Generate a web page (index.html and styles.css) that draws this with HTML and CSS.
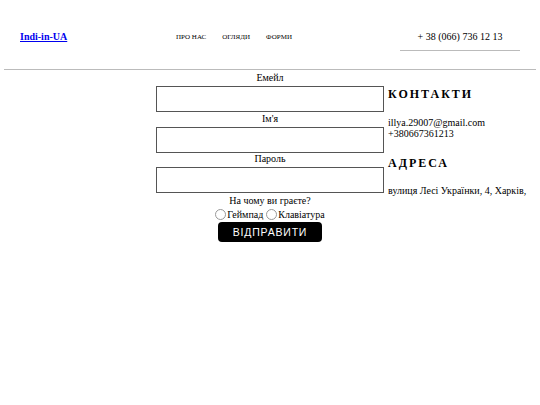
FILE: index.html
```html
<!DOCTYPE html>
<html lang="uk">
<head>
<meta charset="utf-8">
<title>Indi-in-UA</title>
<link rel="stylesheet" href="styles.css">
</head>
<body>
<div class="page">
  <header class="header">
    <a class="logo" href="#">Indi-in-UA</a>
    <nav class="nav">
      <a href="#">ПРО НАС</a>
      <a href="#">ОГЛЯДИ</a>
      <a href="#">ФОРМИ</a>
    </nav>
    <div class="phone">+ 38 (066) 736 12 13</div>
  </header>
  <hr class="divider">
  <main class="main">
    <div class="spacer"></div>
    <form class="form">
      <label class="lbl">Емейл</label>
      <input class="field" type="email">
      <label class="lbl">Ім'я</label>
      <input class="field" type="text">
      <label class="lbl">Пароль</label>
      <input class="field" type="password">
      <p class="question">На чому ви граєте?</p>
      <div class="radios">
        <label class="radio"><span class="dot"></span>Геймпад</label>
        <label class="radio"><span class="dot"></span>Клавіатура</label>
      </div>
      <button class="submit" type="button">ВІДПРАВИТИ</button>
    </form>
    <aside class="aside">
      <h2 class="heading">КОНТАКТИ</h2>
      <p class="info">illya.29007@gmail.com<br>+380667361213</p>
      <h2 class="heading">АДРЕСА</h2>
      <p class="info addr">вулиця Лесі Українки, 4, Харків,</p>
    </aside>
  </main>
</div>
</body>
</html>
```

FILE: styles.css
```css
* { box-sizing: border-box; }
body {
  margin: 0;
  font-family: "Liberation Serif", "Times New Roman", serif;
  color: #000;
  background: #fff;
}
.page { padding: 0 4px; }
.header {
  display: flex;
  align-items: flex-start;
  height: 69px;
  padding-top: 30px;
}
.logo {
  margin-left: 16px;
  font-size: 10px;
  font-weight: bold;
  color: #0000ee;
  text-decoration: underline;
  width: 156px;
  line-height: 14px;
}
.nav {
  display: flex;
  gap: 16px;
  padding-top: 2px;
}
.nav a {
  font-size: 7px;
  color: #000;
  text-decoration: none;
  line-height: 10px;
}
.phone {
  margin-left: auto;
  margin-right: 16px;
  width: 120px;
  text-align: center;
  font-size: 10px;
  line-height: 13px;
  padding-bottom: 7px;
  border-bottom: 1px solid #bbb;
}
.divider {
  margin: 0;
  border: 0;
  border-top: 1px solid #bbb;
}
.main {
  display: grid;
  grid-template-columns: 1fr 228px 1fr;
  column-gap: 4px;
  padding-top: 2px;
}
.form {
  display: flex;
  flex-direction: column;
  align-items: center;
}
.lbl {
  font-size: 10px;
  line-height: 12px;
  margin-bottom: 2px;
}
.field {
  width: 228px;
  height: 26px;
  border: 1px solid #555;
  border-radius: 0;
  margin: 0 0 0.5px;
  padding: 0;
}
.question {
  margin: 1px 0 0;
  font-size: 10px;
  line-height: 12px;
}
.radios {
  display: flex;
  gap: 3px;
  font-size: 10px;
  line-height: 13px;
  margin-top: 1px;
}
.radio {
  display: flex;
  align-items: center;
}
.dot {
  width: 11px;
  height: 11px;
  border: 1px solid #999;
  border-radius: 50%;
  margin-right: 1px;
}
.submit {
  margin-top: 1px;
  width: 104px;
  height: 20px;
  background: #000;
  color: #fff;
  border: 0;
  border-radius: 4px;
  font-family: "Liberation Sans", Arial, sans-serif;
  font-size: 10.5px;
  letter-spacing: 0.8px;
  padding: 0;
}
.aside { padding-top: 15px; }
.heading {
  margin: 0;
  font-size: 12px;
  letter-spacing: 2px;
  font-weight: bold;
  line-height: 14px;
}
.info {
  margin: 16px 0 17px;
  font-size: 10px;
  line-height: 11px;
}
.addr { margin-top: 15px; }
```
